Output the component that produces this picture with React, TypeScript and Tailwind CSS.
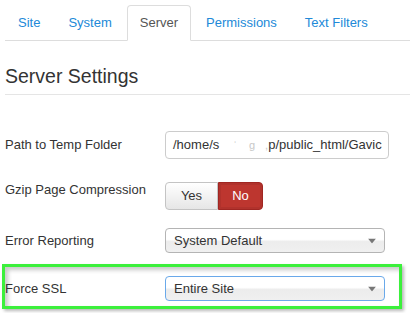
import React from "react";

const font = { fontFamily: '"Liberation Sans", Arial, sans-serif' };

function Tab({ label, active }: { label: string; active?: boolean }) {
  return (
    <li className="-mb-px mr-[2px]">
      <div
        className={
          active
            ? "h-[36px] px-[12px] leading-[34px] border border-[#ddd] border-b-white rounded-t-[4px] bg-white text-[#555]"
            : "h-[36px] px-[12px] leading-[34px] border border-transparent text-[#2189d8]"
        }
      >
        {label}
      </div>
    </li>
  );
}

function Arrow() {
  return (
    <svg width="8" height="5" viewBox="0 0 8 5" className="absolute right-[8px] top-1/2 -translate-y-1/2">
      <path d="M0 0 L8 0 L4 5 Z" fill="#777" />
    </svg>
  );
}

function Select({ value, focused }: { value: string; focused?: boolean }) {
  return (
    <div
      className={
        "relative w-[220px] h-[25px] rounded-[4px] border pl-[8px] leading-[23px] text-[#333] bg-[linear-gradient(#ffffff_0%,#ffffff_45%,#ececec_55%,#f0f0f0_100%)] " +
        (focused ? "border-[#6aa9ea]" : "border-[#b4b4b4]")
      }
    >
      {value}
      <Arrow />
    </div>
  );
}

export default function App() {
  return (
    <div className="w-[410px] h-[313px] bg-white overflow-hidden pl-[5px] pt-[5px] text-[13px] text-[#333]" style={font}>
      <ul className="flex border-b border-[#ddd] h-[36px]">
        <Tab label="Site" />
        <Tab label="System" />
        <Tab label="Server" active />
        <Tab label="Permissions" />
        <Tab label="Text Filters" />
      </ul>

      <div className="mt-[16px] h-[38px] leading-[38px] text-[19.5px] text-[#333] border-b border-[#e5e5e5]">
        Server Settings
      </div>

      <div className="mt-[36px] flex items-center h-[28px]">
        <div className="w-[160px]">Path to Temp Folder</div>
        <div className="w-[224px] h-[28px] rounded-[4px] border border-[#ccc] pl-[7px] leading-[26px] text-[#333] whitespace-nowrap overflow-hidden flex">
          <span>/home/s</span>
          <span className="w-[52px] shrink-0 flex text-[#c8c8c8] text-[11px]">
            <span className="ml-[14px]">ˈ</span>
            <span className="ml-[12px]">ɡ</span>
            <span className="ml-[10px]">,</span>
          </span>
          <span className="-ml-[3px]">p/public_html/Gavic</span>
        </div>
      </div>

      <div className="mt-[23px] flex items-start h-[28px]">
        <div className="w-[160px] leading-[18px] -mt-[1px]">Gzip Page Compression</div>
        <div className="flex h-[28px]">
          <div className="w-[53px] h-[28px] border border-[#c4c4c4] rounded-l-[4px] text-center leading-[26px] text-[#333] bg-[linear-gradient(#ffffff,#e6e6e6)]">
            Yes
          </div>
          <div className="w-[45px] h-[28px] border border-[#a02622] rounded-r-[4px] text-center leading-[26px] text-white bg-[#bd362f] shadow-[inset_0_0_0_2px_rgba(0,0,0,0.06)]">
            No
          </div>
        </div>
      </div>

      <div className="mt-[18px] flex items-center h-[25px]">
        <div className="w-[160px]">Error Reporting</div>
        <Select value="System Default" />
      </div>

      <div className="mt-[11px] -ml-[3px] w-[400px] h-[45px] border-[3px] border-[#3cf03c] pt-[9px] pb-[6px] shadow-[inset_3px_3px_4px_rgba(0,0,0,0.22),2px_2px_3px_rgba(0,0,0,0.28)]">
        <div className="flex items-center h-[25px]">
          <div className="w-[160px]">Force SSL</div>
          <Select value="Entire Site" focused />
        </div>
      </div>
    </div>
  );
}
